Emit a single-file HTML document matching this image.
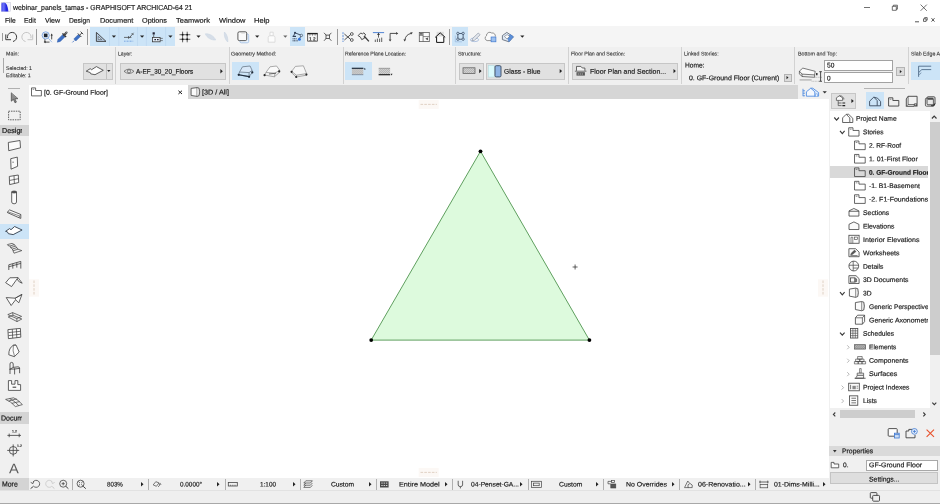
<!DOCTYPE html>
<html lang="en"><head><meta charset="utf-8"><title>webinar_panels_tamas - GRAPHISOFT ARCHICAD-64 21</title>
<style>
html,body{margin:0;padding:0}
body{width:940px;height:504px;position:relative;overflow:hidden;background:#fff;font-family:"Liberation Sans", sans-serif;}
.a{position:absolute;display:block}
.t{position:absolute;white-space:nowrap;transform-origin:0 50%;-webkit-text-stroke:0.18px;}
svg{overflow:visible}
</style></head><body>
<div class="a" style="left:0px;top:0px;width:940px;height:26.4px;background:#ffffff;"></div>
<svg class="a" style="left:0px;top:0px;" width="12" height="13" viewBox="0 0 12 13"><defs><linearGradient id="gi" x1="0" y1="0" x2="1" y2="0"><stop offset="0" stop-color="#4a4ef0"/><stop offset="0.35" stop-color="#6a70f6"/><stop offset="0.7" stop-color="#2226e0"/><stop offset="1" stop-color="#2a2ee4"/></linearGradient></defs><rect x="1.4" y="2.4" width="9" height="9" fill="#f4f4fc" stroke="#c4c4d4" stroke-width="0.5"/><path d="M1.4 11.4V3.6Q1.8 2.4 4.2 2.4Q7.6 3 8.4 11.4Z" fill="url(#gi)"/></svg>
<svg class="a" style="left:0px;top:0px;" width="940" height="14" viewBox="0 0 940 14"><path d="M864 7.5h6" stroke="#333" stroke-width="0.7" fill="none"/><path d="M892.3 6.3h4v4h-4z M893.4 6.3v-1.1h4v4h-1.1" stroke="#333" stroke-width="0.7" fill="none"/><path d="M920.6 4.6l6.2 6.2m0-6.2l-6.2 6.2" stroke="#333" stroke-width="0.7" fill="none"/></svg>
<svg class="a" style="left:890px;top:15px;" width="50" height="10" viewBox="0 0 50 10"><path d="M25 6.8h4" stroke="#555" stroke-width="1" fill="none"/><path d="M33.5 3.8h2.6v2.6h-2.6z M34.6 3.6v-1h2.6v2.6h-1" stroke="#444" stroke-width="0.8" fill="none"/><path d="M41.5 3.2l3 3.4m0-3.4l-3 3.4" stroke="#444" stroke-width="0.9" fill="none"/></svg>
<div class="a" style="left:0px;top:26.4px;width:940px;height:58.2px;background:#f0f0f0;"></div>
<div class="a" style="left:0px;top:26.4px;width:940px;height:20.3px;background:#f5f5f5;"></div>
<div class="a" style="left:90.2px;top:27.1px;width:85px;height:18.9px;background:#cce4f7;"></div>
<div class="a" style="left:290.3px;top:27.1px;width:14.4px;height:18.8px;background:#cce4f7;"></div>
<div class="a" style="left:452.4px;top:27.1px;width:15.2px;height:18.8px;background:#cce4f7;"></div>
<div class="a" style="left:36.4px;top:28.5px;width:0.7px;height:16.5px;background:#9a9a9a;"></div>
<div class="a" style="left:87.3px;top:28.5px;width:0.7px;height:16.5px;background:#9a9a9a;"></div>
<div class="a" style="left:337.2px;top:28.5px;width:0.7px;height:16.5px;background:#9a9a9a;"></div>
<div class="a" style="left:449.3px;top:28.5px;width:0.7px;height:16.5px;background:#9a9a9a;"></div>
<div class="a" style="left:2.3px;top:33px;width:0.7px;height:8.4px;background:#9a9a9a;"></div>
<div class="a" style="left:115.4px;top:47.4px;width:0.9px;height:37px;background:#d2d2d2;"></div>
<div class="a" style="left:228.5px;top:47.4px;width:0.9px;height:37px;background:#d2d2d2;"></div>
<div class="a" style="left:342.5px;top:47.4px;width:0.9px;height:37px;background:#d2d2d2;"></div>
<div class="a" style="left:455px;top:47.4px;width:0.9px;height:37px;background:#d2d2d2;"></div>
<div class="a" style="left:568px;top:47.4px;width:0.9px;height:37px;background:#d2d2d2;"></div>
<div class="a" style="left:681.2px;top:47.4px;width:0.9px;height:37px;background:#d2d2d2;"></div>
<div class="a" style="left:794.2px;top:47.4px;width:0.9px;height:37px;background:#d2d2d2;"></div>
<div class="a" style="left:907.5px;top:47.4px;width:0.9px;height:37px;background:#d2d2d2;"></div>
<div class="a" style="left:3.2px;top:58px;width:0.7px;height:15px;background:#a8a8a8;"></div>
<div class="a" style="left:83px;top:62.5px;width:30px;height:17px;background:#e1e1e1;border:1px solid #c6c6c6;box-sizing:border-box;"></div>
<div class="a" style="left:105.8px;top:63.5px;width:0.6px;height:15px;background:#c0c0c0;"></div>
<div class="a" style="left:119.5px;top:63px;width:106.3px;height:16.5px;background:#e1e1e1;border:1px solid #c6c6c6;box-sizing:border-box;"></div>
<div class="a" style="left:232px;top:62px;width:27px;height:18px;background:#cce4f7;"></div>
<div class="a" style="left:345px;top:62px;width:27px;height:18px;background:#cce4f7;"></div>
<div class="a" style="left:459px;top:63px;width:25px;height:16.5px;background:#e1e1e1;border:1px solid #c6c6c6;box-sizing:border-box;"></div>
<div class="a" style="left:485.8px;top:63px;width:79.5px;height:16.5px;background:#e1e1e1;border:1px solid #c6c6c6;box-sizing:border-box;"></div>
<div class="a" style="left:572px;top:63px;width:106.3px;height:16.5px;background:#e1e1e1;border:1px solid #c6c6c6;box-sizing:border-box;"></div>
<div class="a" style="left:784px;top:74px;width:8px;height:8px;background:#dcdcdc;border:0.6px solid #b4b4b4;box-sizing:border-box;"></div>
<div class="a" style="left:824px;top:59.5px;width:68.5px;height:11px;background:#fff;border:0.8px solid #a2a2a2;box-sizing:border-box;"></div>
<div class="a" style="left:824px;top:72.3px;width:68.5px;height:11px;background:#fff;border:0.8px solid #a2a2a2;box-sizing:border-box;"></div>
<div class="a" style="left:896px;top:67.3px;width:9px;height:8.7px;background:#dcdcdc;border:0.6px solid #b4b4b4;box-sizing:border-box;"></div>
<div class="a" style="left:910.5px;top:62px;width:30px;height:18px;background:#cce4f7;"></div>
<div class="a" style="left:28.5px;top:84.6px;width:770px;height:14.1px;background:#d6d6d6;"></div>
<div class="a" style="left:28.6px;top:84.6px;width:159.2px;height:14.1px;background:#ffffff;"></div>
<div class="a" style="left:798.4px;top:84.6px;width:30.4px;height:14.1px;background:#f0f0f0;"></div>
<div class="a" style="left:0px;top:84.6px;width:28.6px;height:419.4px;background:#f0f0f0;"></div>
<div class="a" style="left:7.5px;top:87.6px;width:12px;height:0.6px;background:#b0b0b0;"></div>
<div class="a" style="left:0px;top:124.9px;width:28.5px;height:11.3px;background:#d4d4d4;"></div>
<div class="a" style="left:0px;top:223.5px;width:28.5px;height:15.7px;background:#cce4f7;"></div>
<div class="a" style="left:0px;top:412.4px;width:28.5px;height:12px;background:#d4d4d4;"></div>
<div class="a" style="left:0px;top:477.8px;width:28.5px;height:12.6px;background:#d4d4d4;"></div>
<svg class="a" style="left:28.5px;top:99px;" width="800" height="379" viewBox="0 0 800 379">
<polygon points="451.5,52.3 342.2,241.1 560.4,241.1" fill="#ddfadd" stroke="#5f9f5f" stroke-width="1" stroke-linejoin="round"/>
<circle cx="451.5" cy="52.3" r="1.9" fill="#000"/><circle cx="342.2" cy="241.1" r="1.9" fill="#000"/><circle cx="560.4" cy="241.1" r="1.9" fill="#000"/>
<path d="M543.6 168h5M546.1 165.5v5" stroke="#222" stroke-width="0.7" fill="none"/>
</svg>
<div class="a" style="left:28.5px;top:477.8px;width:800.5px;height:12.6px;background:#f0f0f0;"></div>
<div class="a" style="left:0px;top:490.3px;width:940px;height:13.7px;background:#efefef;"></div>
<div class="a" style="left:0px;top:490.3px;width:940px;height:0.6px;background:#e2e2e2;"></div>
<div class="a" style="left:0px;top:503px;width:940px;height:1px;background:#a8a8a8;"></div>
<svg class="a" style="left:140.8px;top:481.9px;" width="3" height="5" viewBox="0 0 3 5"><path d="M0 0L2.5 2.2L0 4.4Z" fill="#222"/></svg>
<svg class="a" style="left:217.0px;top:481.9px;" width="3" height="5" viewBox="0 0 3 5"><path d="M0 0L2.5 2.2L0 4.4Z" fill="#222"/></svg>
<svg class="a" style="left:292.5px;top:481.9px;" width="3" height="5" viewBox="0 0 3 5"><path d="M0 0L2.5 2.2L0 4.4Z" fill="#222"/></svg>
<svg class="a" style="left:368.8px;top:481.9px;" width="3" height="5" viewBox="0 0 3 5"><path d="M0 0L2.5 2.2L0 4.4Z" fill="#222"/></svg>
<svg class="a" style="left:444.5px;top:481.9px;" width="3" height="5" viewBox="0 0 3 5"><path d="M0 0L2.5 2.2L0 4.4Z" fill="#222"/></svg>
<svg class="a" style="left:520.3px;top:481.9px;" width="3" height="5" viewBox="0 0 3 5"><path d="M0 0L2.5 2.2L0 4.4Z" fill="#222"/></svg>
<svg class="a" style="left:595.8px;top:481.9px;" width="3" height="5" viewBox="0 0 3 5"><path d="M0 0L2.5 2.2L0 4.4Z" fill="#222"/></svg>
<svg class="a" style="left:671.6999999999999px;top:481.9px;" width="3" height="5" viewBox="0 0 3 5"><path d="M0 0L2.5 2.2L0 4.4Z" fill="#222"/></svg>
<svg class="a" style="left:748.0999999999999px;top:481.9px;" width="3" height="5" viewBox="0 0 3 5"><path d="M0 0L2.5 2.2L0 4.4Z" fill="#222"/></svg>
<svg class="a" style="left:822.8px;top:481.9px;" width="3" height="5" viewBox="0 0 3 5"><path d="M0 0L2.5 2.2L0 4.4Z" fill="#222"/></svg>
<div class="a" style="left:72.3px;top:479px;width:0.7px;height:10.5px;background:#b0b0b0;"></div>
<div class="a" style="left:148.4px;top:479px;width:0.7px;height:10.5px;background:#b0b0b0;"></div>
<div class="a" style="left:224.5px;top:479px;width:0.7px;height:10.5px;background:#b0b0b0;"></div>
<div class="a" style="left:299.6px;top:479px;width:0.7px;height:10.5px;background:#b0b0b0;"></div>
<div class="a" style="left:375.7px;top:479px;width:0.7px;height:10.5px;background:#b0b0b0;"></div>
<div class="a" style="left:451.8px;top:479px;width:0.7px;height:10.5px;background:#b0b0b0;"></div>
<div class="a" style="left:527.5px;top:479px;width:0.7px;height:10.5px;background:#b0b0b0;"></div>
<div class="a" style="left:603.4px;top:479px;width:0.7px;height:10.5px;background:#b0b0b0;"></div>
<div class="a" style="left:679.4px;top:479px;width:0.7px;height:10.5px;background:#b0b0b0;"></div>
<div class="a" style="left:754.6px;top:479px;width:0.7px;height:10.5px;background:#b0b0b0;"></div>
<div class="a" style="left:828.5px;top:84.6px;width:111.5px;height:405.7px;background:#f0f0f0;"></div>
<div class="a" style="left:864px;top:87.8px;width:41px;height:0.7px;background:#b4b4b4;"></div>
<div class="a" style="left:830.5px;top:92.8px;width:25.3px;height:16.5px;background:#e1e1e1;border:1px solid #c6c6c6;box-sizing:border-box;"></div>
<div class="a" style="left:866.3px;top:92px;width:18px;height:17.3px;background:#cce4f7;"></div>
<div class="a" style="left:829.5px;top:110.6px;width:110.5px;height:297px;background:#ffffff;"></div>
<div class="a" style="left:929.8px;top:110.6px;width:10.2px;height:297px;background:#f0f0f0;"></div>
<div class="a" style="left:930px;top:122.2px;width:10px;height:232.8px;background:#cdcdcd;"></div>
<div class="a" style="left:829.5px;top:166px;width:98.9px;height:12.2px;background:#d9d9d9;"></div>
<div class="a" style="left:829.5px;top:407.6px;width:110.5px;height:12px;background:#f0f0f0;"></div>
<div class="a" style="left:839.6px;top:409.8px;width:75.7px;height:8.6px;background:#cdcdcd;"></div>
<div class="a" style="left:828.7px;top:445.8px;width:111.3px;height:10.4px;background:#dadada;"></div>
<svg class="a" style="left:832.8px;top:449.6px;" width="4" height="3" viewBox="0 0 4 3"><path d="M0 0h3.6L1.8 2.4Z" fill="#333"/></svg>
<div class="a" style="left:866.3px;top:459.5px;width:72.2px;height:11px;background:#fff;border:0.8px solid #a8a8a8;box-sizing:border-box;"></div>
<div class="a" style="left:830.2px;top:472.4px;width:108px;height:12px;background:#dedede;border:0.8px solid #c4c4c4;box-sizing:border-box;"></div>
<svg class="a" style="left:0;top:0" width="940" height="504" viewBox="0 0 940 504"><g transform="translate(11.5 37)" ><path d="M-3.9 1.2A4.6 4.6 0 1 1 1.5 4.5" fill="none" stroke="#3a3a3a" stroke-width="1"/><path d="M-5.7 -2.6V2.7H-0.5" fill="none" stroke="#3a3a3a" stroke-width="1"/></g>
<g transform="translate(27 37)" ><path d="M3.9 1.2A4.6 4.6 0 1 0 -1.5 4.5" fill="none" stroke="#c6c6c6" stroke-width="1"/><path d="M5.7 -2.6V2.7H0.5" fill="none" stroke="#c6c6c6" stroke-width="1"/></g>
<g transform="translate(47.3 37.2)" ><circle cx="-1.6" cy="-1.8" r="3.6" fill="#e8f0fb" stroke="#5b8fd8" stroke-width="0.7"/><rect x="-3.4" y="-3.6" width="3.6" height="3.6" fill="#1d2530"/><path d="M1 1L4.6 5" stroke="#7fa8e0" stroke-width="0.7"/><path d="M-2.4 2v2.9h4.6" fill="none" stroke="#222" stroke-width="0.8"/><path d="M-3.6 4.9l1.8-1.1v2.2z" fill="#222"/><path d="M4.4 -2.2v4.4" stroke="#222" stroke-width="0.8"/><path d="M4.4 -3.6l1.1 1.9h-2.2z" fill="#222"/></g>
<g transform="translate(62.5 37)" ><path d="M-5.2 5.2L-4.4 2.2L0.6 -2.8L2.8 -0.6L-2.2 4.4Z" fill="#3c6fc4" stroke="#2c5aa8" stroke-width="0.5"/><path d="M0 -3.6L3.6 0" stroke="#333" stroke-width="1.3"/><path d="M1.6 -1.8L4 -4.4" stroke="#444" stroke-width="2.2" stroke-linecap="round"/><path d="M3.2 -3.4L4.4 -4.8" stroke="#dfe6f2" stroke-width="0.6"/></g>
<g transform="translate(77.8 37)" ><path d="M-5.4 5.4L-3.6 3.6" stroke="#3c6fc4" stroke-width="0.8"/><path d="M-4 2L0.6 -2.6L2.6 -0.6L-2 4Z" fill="#3c6fc4" stroke="#2c5aa8" stroke-width="0.5"/><path d="M0 -3.6L3.6 0" stroke="#333" stroke-width="0.9"/><path d="M1.8 -1.8L4.2 -4.2M2.8 -5.4L5.4 -2.8" stroke="#333" stroke-width="0.9"/></g>
<path d="M109.5 27.2V46" stroke="#b9d3ec" stroke-width="0.6"/>
<path d="M118.8 27.2V46" stroke="#b9d3ec" stroke-width="0.6"/>
<path d="M137.5 27.2V46" stroke="#b9d3ec" stroke-width="0.6"/>
<path d="M146.4 27.2V46" stroke="#b9d3ec" stroke-width="0.6"/>
<path d="M165.6 27.2V46" stroke="#b9d3ec" stroke-width="0.6"/>
<g transform="translate(101.2 37)" ><path d="M-4.8 -4.6V4.4H4.8Z" fill="#b8cde4" stroke="#3a3a3a" stroke-width="0.9" stroke-linejoin="round"/><path d="M-3 -0.6V2.6H0.6Z" fill="#cce4f7" stroke="#3a3a3a" stroke-width="0.5"/></g>
<path d="M111.80000000000001 35.45h4.2l-2.1 2.3z" fill="#222"/>
<g transform="translate(129 37)" ><path d="M-5 0.4H2.4M-0.4 -1v2.8M0.6 0.6L4.6 -4.2M2.6 -3.4l2 1" fill="none" stroke="#3a3a3a" stroke-width="0.7"/><path d="M-5 4.2H4.2" stroke="#5b8fd8" stroke-width="0.8" stroke-dasharray="0.9 0.6"/></g>
<path d="M140.0 35.45h4.2l-2.1 2.3z" fill="#222"/>
<g transform="translate(157.4 37.2)" ><rect x="-4.8" y="-4.9" width="2.2" height="2.2" fill="#223"/><path d="M-3.7 -2.6V0.2" stroke="#3a3a3a" stroke-width="0.7"/><rect x="-4.9" y="0.2" width="7.6" height="4.4" fill="#e6f0fa" stroke="#3a3a3a" stroke-width="0.8"/><path d="M-3 2.4h1.6M-0.4 2.4h1.6" stroke="#223" stroke-width="1.4"/><path d="M2.8 1.2h2.6M2.8 3.4h2.6" stroke="#3a3a3a" stroke-width="0.6"/></g>
<path d="M168.3 35.45h4.2l-2.1 2.3z" fill="#222"/>
<g transform="translate(184.9 37)" ><path d="M-2.3 -5.3V5.3M2.3 -5.3V5.3M-5.4 -2.3H5.4M-5.4 2.3H5.4" stroke="#222" stroke-width="0.7"/><rect x="-3.1" y="-3.1" width="1.6" height="1.6" fill="#111"/><rect x="1.5" y="-3.1" width="1.6" height="1.6" fill="#111"/><rect x="-3.1" y="1.5" width="1.6" height="1.6" fill="#111"/><rect x="1.5" y="1.5" width="1.6" height="1.6" fill="#111"/></g>
<path d="M196.4 35.45h4.2l-2.1 2.3z" fill="#222"/>
<g transform="translate(210.5 37)" ><path d="M-5.2 -3.2C-1 -3.6 3.6 -1 5.2 3C1 3.4 -3.6 1 -5.2 -3.2Z" fill="#d6dee8" stroke="#c6d2e0" stroke-width="0.5"/></g>
<g transform="translate(226 37)" ><path d="M-1.6 -5C1 -3 2.2 1.6 1.8 5C-1 3 -2.2 -1.6 -1.6 -5Z" fill="#d6dee8" stroke="#c6d2e0" stroke-width="0.5"/></g>
<g transform="translate(243.3 37.2)" ><rect x="-3.4" y="-3.2" width="8.8" height="8.8" rx="1.4" fill="#eaf2fb" stroke="#9dbde4" stroke-width="0.8"/><rect x="-5.4" y="-5.4" width="8.8" height="8.8" rx="1.4" fill="#fafafa" stroke="#4a4a4a" stroke-width="0.9"/><path d="M-2 -3.8h3.6" stroke="#cfcfcf" stroke-width="0.6"/></g>
<path d="M255.1 35.45h4.2l-2.1 2.3z" fill="#222"/>
<g transform="translate(271.6 37.2)" ><path d="M-1.6 -5h3.2v3.6h-3.2z" fill="#fcfcfc" stroke="#d2d2d2" stroke-width="0.7"/><path d="M-3.4 5V0.2Q-3.4 -1.4 -1.6 -1.4H1.6Q3.4 -1.4 3.4 0.2V5Z" fill="#fcfcfc" stroke="#d2d2d2" stroke-width="0.7"/></g>
<path d="M283.2 35.45h4.2l-2.1 2.3z" fill="#666"/>
<g transform="translate(297.6 37)" ><path d="M-4.2 -0.6L-2.6 -4.2L3.8 -1.6L1.4 2.4" fill="none" stroke="#2f3e55" stroke-width="0.9"/><circle cx="-2.6" cy="-4.2" r="1" fill="#2f3e55"/><circle cx="3.8" cy="-1.6" r="1.2" fill="#cce4f7" stroke="#2f3e55" stroke-width="0.6"/><circle cx="1.8" cy="2.2" r="1.5" fill="#2f6fd8"/><path d="M-5 -0.6h3.4" stroke="#2f3e55" stroke-width="1.2"/><path d="M-5 1.8h4.2M-5 3.8h5.2" stroke="#2f3e55" stroke-width="1" stroke-dasharray="1 0.5"/></g>
<g transform="translate(312.5 37.2)" ><path d="M-5.2 -3.6H5.2" stroke="#222" stroke-width="1.4"/><path d="M-4.9 -3.6V4H4.9V-3.6" fill="none" stroke="#3a3a3a" stroke-width="0.8"/><path d="M-2.6 -3V-1.6M0 -3V-1.6M2.6 -3V-1.6" stroke="#3a3a3a" stroke-width="0.6"/></g>
<g transform="translate(327.7 36.8)" ><path d="M-3.7 -4L3.7 4M3.7 -4L-3.7 4" stroke="#3a3a3a" stroke-width="0.8"/><rect x="-1.7" y="-1.7" width="3.4" height="3.4" fill="#f0f0f0" stroke="#3a3a3a" stroke-width="0.8"/></g>
<g transform="translate(348 37)" ><path d="M-5 -4.8V5" stroke="#3f78d0" stroke-width="0.8" stroke-dasharray="2 0.8"/><path d="M-3.6 -3L2.6 2.4M-3.6 3L2.6 -2.4" stroke="#3a3a3a" stroke-width="0.9"/><circle cx="3.8" cy="-3" r="1.4" fill="none" stroke="#3a3a3a" stroke-width="0.8"/><circle cx="3.8" cy="3" r="1.4" fill="none" stroke="#3a3a3a" stroke-width="0.8"/></g>
<g transform="translate(363.3 37.2)" ><path d="M-5.2 -1.6L-2.6 -4.2L-0.8 -3.4L0.6 -4.4L2.4 -2.2L0.8 -0.8L1.2 1L-1.6 2.4L-2.8 0Z" fill="none" stroke="#3a3a3a" stroke-width="0.9" stroke-linejoin="round"/><path d="M1 -1L5.6 4.2" stroke="#3a3a3a" stroke-width="1.3"/></g>
<g transform="translate(378.5 37)" ><path d="M-5.6 -4.4H5.6" stroke="#3f78d0" stroke-width="0.9"/><path d="M0 -3.6V0.6" stroke="#3a3a3a" stroke-width="0.8"/><path d="M0 -4.2l1.5 2.2h-3z" fill="#3a3a3a"/><path d="M-3.2 2.6V5M-1.1 1.6V5M1.1 1.6V5M3.2 0.6V5" stroke="#3a3a3a" stroke-width="0.8"/></g>
<g transform="translate(393.5 36.8)" ><path d="M-3.4 3V-3.4H3" fill="none" stroke="#3a3a3a" stroke-width="0.9"/><path d="M4.8 -3.4l-2.2 -1.4v2.8z M-3.4 4.8l-1.4 -2.2h2.8z" fill="#3a3a3a"/></g>
<g transform="translate(408.3 36.8)" ><path d="M-3.4 3.2Q-2.6 -2.4 3 -3.4" fill="none" stroke="#3a3a3a" stroke-width="0.9"/><path d="M4.6 -4.2l-2.6 -0.4l0.8 2.4z M-3.6 4.8l-1.3 -2.2h2.6z" fill="#3a3a3a"/></g>
<g transform="translate(424.3 37)" ><rect x="-5" y="-4.6" width="10" height="9.2" fill="#fafafa" stroke="#5a5a5a" stroke-width="0.8"/><path d="M-1.2 -4.6V4.6M-1.2 -0.4H5M-5 -1.6H-1.2" stroke="#5a5a5a" stroke-width="0.7"/><rect x="-4.4" y="-4.2" width="2.8" height="2" fill="#6a6a6a"/><path d="M1 1.8l2.6-1.4v2.8z" fill="#444"/></g>
<g transform="translate(440.2 37.4)" ><rect x="-3.6" y="-5.6" width="7.2" height="5" fill="#dcdcdc"/><path d="M-5 0L0 -4.6L5 0" fill="none" stroke="#111" stroke-width="1" stroke-linejoin="miter"/><path d="M-3.6 -0.8V5H3.6V-0.8" fill="#fdfdfd" stroke="#111" stroke-width="1"/></g>
<g transform="translate(460.5 36.6)" ><rect x="-2.6" y="-3" width="5.2" height="5.6" fill="none" stroke="#34445c" stroke-width="0.8"/><circle cx="-2.6" cy="-3.2" r="1.2" fill="#cce4f7" stroke="#34445c" stroke-width="0.7"/><circle cx="2.6" cy="-3.2" r="1.2" fill="#cce4f7" stroke="#34445c" stroke-width="0.7"/><circle cx="-2.6" cy="2.6" r="1.2" fill="#cce4f7" stroke="#34445c" stroke-width="0.7"/><circle cx="2.6" cy="2.6" r="1.2" fill="#cce4f7" stroke="#34445c" stroke-width="0.7"/><path d="M-5.2 -1V5.2H1.4" fill="none" stroke="#8fb0d8" stroke-width="0.6"/></g>
<g transform="translate(475.5 37.4)" ><ellipse cx="-1" cy="2.4" rx="4.2" ry="1.8" fill="none" stroke="#7f9fd0" stroke-width="0.6"/><path d="M-3.6 3.4L-2.8 1L2.8 -4.4L4.6 -2.6L-1 2.8Z" fill="#e4e8ee" stroke="#8a94a4" stroke-width="0.7"/></g>
<g transform="translate(490.5 37)" ><path d="M-3.4 3.6A2.6 2.6 0 0 1 -4 -1.2A3.2 3.2 0 0 1 1.2 -4A3 3 0 0 1 4.8 -0.4" fill="#fafafa" stroke="#7a7a7a" stroke-width="0.8"/><path d="M-3.4 3.6H0.6" stroke="#7a7a7a" stroke-width="0.8"/><rect x="0.6" y="0" width="4.8" height="4.8" fill="#9dc0ee" stroke="#3f78d0" stroke-width="0.7"/></g>
<g transform="translate(507.8 37)" ><path d="M-5.4 -1.4L-1 -4.6L5.6 -0.2L1.2 4.8L-5.4 2.6Z" fill="#dfe8f4" stroke="#55606e" stroke-width="0.8" stroke-linejoin="round"/><path d="M-0.6 0.2L2.8 -2.4L5.6 -0.2L1.2 4.8Z" fill="#5b8fd8" stroke="#3f78d0" stroke-width="0.5"/><path d="M-3.4 -0.6L-0.6 -2.4L1.8 -0.6L-0.8 2Z" fill="#fafafa" stroke="#55606e" stroke-width="0.5"/></g>
<path d="M520.1999999999999 35.45h4.2l-2.1 2.3z" fill="#222"/>
<g transform="translate(94.8 70.7)" ><path d="M-8.6 0.5L-4.6 -2L-3.2 -1L1.6 -4.1L8.5 -0.4L0.2 4L-4 3.2L-4.6 1.8Z" fill="#fdfdfd" stroke="#3a3a3a" stroke-width="0.8" stroke-linejoin="round"/></g>
<path d="M107.1 69.9h3.4l-1.7 2z" fill="#222"/>
<g transform="translate(129 71.3)" ><path d="M-5 0Q0 -4.4 5 0Q0 4.4 -5 0Z" fill="none" stroke="#555" stroke-width="0.7"/><circle cx="0" cy="0" r="1.6" fill="none" stroke="#555" stroke-width="0.7"/></g>
<path d="M220.4 69.0l2.4 2.2l-2.4 2.2z" fill="#222"/>
<g transform="translate(245.5 71)" ><path d="M-6 1L-3 -4.2L4.6 -5L6.6 -0.6L3.6 1.6Z" fill="#d8e8f8" stroke="#5a6a7a" stroke-width="0.7" stroke-linejoin="round"/><path d="M-6 1L-6.8 3.8L3.6 5.6L6.8 1.6L6.6 -0.6M3.6 1.6V5.6" fill="none" stroke="#5a6a7a" stroke-width="0.7" stroke-linejoin="round"/><path d="M-6.8 3.8L3.6 5.6" stroke="#223040" stroke-width="1.1"/><circle cx="-6.8" cy="3.8" r="1.1" fill="#1f2a38"/><circle cx="3.6" cy="5.8" r="1.1" fill="#1f2a38"/><circle cx="6.8" cy="1.4" r="1.1" fill="#1f2a38"/></g>
<g transform="translate(272 71)" ><path d="M-6 1.4L-2 -4.2L4.6 -5L7.6 -0.8L3 2.2Z" fill="#fafafa" stroke="#8a8a8a" stroke-width="0.7" stroke-linejoin="round"/><path d="M-6 1.4L-7.6 4L2.4 5.8L7.4 1.4L7.6 -0.8M3 2.2L2.4 5.8" fill="none" stroke="#8a8a8a" stroke-width="0.7" stroke-linejoin="round"/><path d="M-3 3L4 2.2" stroke="#5a5a5a" stroke-width="0.9"/><circle cx="-7.4" cy="4.2" r="1.1" fill="#2a2a2a"/><circle cx="7.2" cy="0.4" r="1.1" fill="#2a2a2a"/></g>
<g transform="translate(299 71)" ><path d="M-7.4 0.4L-3.6 -4.6L4.4 -5.2L7.6 2.6L-2.6 4.2Z" fill="#f6f6f6" stroke="#8a8a8a" stroke-width="0.7" stroke-linejoin="round"/><path d="M-7.4 0.4L-7.6 1.6L-2.8 6L7.4 4.2L7.6 2.6M-2.6 4.2L-2.8 6" fill="none" stroke="#8a8a8a" stroke-width="0.7" stroke-linejoin="round"/><circle cx="-7.4" cy="0.8" r="1.1" fill="#2a2a2a"/><circle cx="-2.8" cy="6" r="1.1" fill="#2a2a2a"/><circle cx="7.4" cy="3.6" r="1.1" fill="#2a2a2a"/></g>
<defs><pattern id="hat" width="1.4" height="1.4" patternUnits="userSpaceOnUse" patternTransform="rotate(45)"><rect width="1.4" height="1.4" fill="#d8d8d8"/><path d="M0 0V1.4" stroke="#777" stroke-width="0.6"/></pattern></defs>
<g transform="translate(357.6 71.3)" ><rect x="-5.7" y="-2.8" width="11.4" height="6.2" fill="url(#hat)"/><path d="M-5.8 -3H5.8" stroke="#1f2a38" stroke-width="1.2"/><path d="M-5.7 3.4H5.7" stroke="#55657a" stroke-width="0.6"/><path d="M7.2 -3.6l0.9 1.7h-1.8z" fill="#1f2a38"/></g>
<g transform="translate(384.4 71.3)" ><rect x="-5.7" y="-3" width="11.4" height="6.2" fill="url(#hat)"/><path d="M-5.8 3.4H5.8" stroke="#222" stroke-width="1.2"/><path d="M-5.7 -3H5.7" stroke="#777" stroke-width="0.6"/><path d="M7.2 4.2l0.9 -1.7h-1.8z" fill="#222"/></g>
<g transform="translate(469 70.7)" ><rect x="-6" y="-2.9" width="12" height="5.8" fill="url(#hat)" stroke="#555" stroke-width="0.7"/></g>
<path d="M479.2 68.89999999999999l2.4 2.2l-2.4 2.2z" fill="#222"/>
<rect x="488.4" y="65.6" width="5.8" height="11.4" fill="#dcfafc" stroke="#b0dce0" stroke-width="0.5"/><rect x="495" y="65.7" width="6" height="11.2" rx="1.2" fill="#8fb4e4" stroke="#3a4a5e" stroke-width="0.9"/>
<path d="M559.6999999999999 68.89999999999999l2.4 2.2l-2.4 2.2z" fill="#222"/>
<g transform="translate(580.7 71)" ><path d="M-4.2 -0.2V-4.6H0.2L1.6 -3H4.2V-0.2" fill="#f4f4f4" stroke="#444" stroke-width="0.8" stroke-linejoin="round"/><path d="M-5.8 0.2H5.8" stroke="#444" stroke-width="0.7"/><rect x="-4.2" y="1.2" width="8.4" height="3.4" fill="#555"/><path d="M-3 3H3" stroke="#ddd" stroke-width="0.8" stroke-dasharray="1.2 0.8"/></g>
<path d="M673.5 68.89999999999999l2.4 2.2l-2.4 2.2z" fill="#222"/>
<path d="M786.5 75.89999999999999l2 1.7l-2 1.7z" fill="#222"/>
<path d="M899.8 69.89999999999999l2 1.7l-2 1.7z" fill="#222"/>
<g transform="translate(810 74.5)" ><path d="M-10.6 -3.4L-7.2 -6.4L5.2 -3.2L4.6 0.4L-8 -0.4Z" fill="#fbfbfb" stroke="#444" stroke-width="0.7" stroke-linejoin="round"/><path d="M-10.6 -3.4V-0.6L-8 2L4.6 2.8V0.4M-8 -0.4V2" fill="none" stroke="#444" stroke-width="0.7" stroke-linejoin="round"/><path d="M-10.4 5.4H1.6" stroke="#bdbdbd" stroke-width="1.6"/><path d="M4.6 2.8H12M1.6 6.8H12" stroke="#888" stroke-width="0.5" stroke-dasharray="1 0.6"/><path d="M10.6 -3V6.6" stroke="#222" stroke-width="0.8"/><path d="M9.2 -2.8h2.8M9.2 6.8h2.8" stroke="#222" stroke-width="0.7"/><path d="M6.8 -1.6v2.4" stroke="#222" stroke-width="1.4"/></g>
<g transform="translate(925 71.4)" ><path d="M-6.4 -5.2H6.2M-3.2 -1.8H6.2M-6.4 -5.2V1.2L-3.2 -1.8" fill="none" stroke="#3f5a7a" stroke-width="0.8"/><path d="M-6.4 1.2V5.4" stroke="#3f5a7a" stroke-width="0.8"/><path d="M-6.2 3.2Q-4.6 3.2 -3.8 1.2" fill="none" stroke="#3f5a7a" stroke-width="0.5"/></g>
<path transform="translate(31.2 87.5) scale(1.0)" d="M0.3 8.4V0.4H4.4V3H10.2V8.4Z" fill="#fff" stroke="#444" stroke-width="0.8" stroke-linejoin="miter"/><path transform="translate(31.2 87.5) scale(1.0)" d="M1.4 1.8h1.6" stroke="#444" stroke-width="0.6"/>
<g transform="translate(195.5 92)" ><path d="M-4.4 -3.6L1.6 -4.4V4.4L-4.4 3.4Z" fill="#fafafa" stroke="#444" stroke-width="0.8" stroke-linejoin="round"/><path d="M1.6 -4.4L3.6 -3.8Q4.8 0 3.6 3.6L1.6 4.4" fill="#e4e4e4" stroke="#444" stroke-width="0.8" stroke-linejoin="round"/></g>
<path d="M178.4 90.7L182 94M182 90.7L178.4 94" stroke="#222" stroke-width="1"/>
<g transform="translate(810.6 92.2)" ><path d="M-7.6 -3.4V4M-7.6 -1.4h2M-7.6 1h2M-7.6 3.6h2" stroke="#3f82e0" stroke-width="0.8" fill="none"/><path d="M0.2 -4H2.2L8 0.4V4H3.6" fill="#e4eefb" stroke="#3f82e0" stroke-width="0.8" stroke-linejoin="miter"/><path d="M-4.2 4V-0.4L0.2 -4L4.2 -0.4V4Z" fill="#f4f8fe" stroke="#3f82e0" stroke-width="0.8" stroke-linejoin="miter"/><path d="M5 4V1.6H6.8V4" fill="#fff" stroke="#3f82e0" stroke-width="0.5"/></g>
<path d="M822.6 91.25h4.2l-2.1 2.3z" fill="#333"/>
<path d="M11.3 93.2V101.2L13.4 99.4L15 102.8L16.4 102.1L14.9 98.9L17.6 98.7Z" fill="#8c8c8c" stroke="#333" stroke-width="0.6" stroke-linejoin="round" stroke-linecap="round" />
<rect x="8.6" y="111.2" width="11.6" height="8.6" fill="none" stroke="#3c3c3c" stroke-width="0.8" stroke-dasharray="1.5 0.9"/>
<path d="M8.7 142.4L20 140.5L20.5 147.8L9.1 150.6Z" fill="#fbfbfb" stroke="#3c3c3c" stroke-width="0.8" stroke-linejoin="round" stroke-linecap="round" />
<path d="M11.1 158.6L17.3 157.1L17.6 166.3L11.4 169Z" fill="#fbfbfb" stroke="#3c3c3c" stroke-width="0.8" stroke-linejoin="round" stroke-linecap="round" />
<path d="M12.4 162.2h1.4" stroke="#333" stroke-width="0.7"/>
<path d="M9.7 176.4L18.3 175L18.7 182.5L10 184.5Z" fill="#fbfbfb" stroke="#3c3c3c" stroke-width="0.8" stroke-linejoin="round" stroke-linecap="round" />
<path d="M14 175.7L14.4 183.5M9.85 180.4L18.5 178.7" stroke="#3c3c3c" stroke-width="0.7"/>
<path d="M11.7 192V202Q11.8 203.8 14.1 203.8Q16.4 203.8 16.5 202V192" fill="#fbfbfb" stroke="#3c3c3c" stroke-width="0.8" stroke-linejoin="round" stroke-linecap="round" />
<ellipse cx="14.1" cy="192" rx="2.4" ry="1" fill="#555" stroke="#3c3c3c" stroke-width="0.7"/>
<path d="M7.7 211.7L9.6 209.9L20.8 214.5V218.4L19.2 217.8L7.9 212.8Z" fill="#fbfbfb" stroke="#3c3c3c" stroke-width="0.8" stroke-linejoin="round" stroke-linecap="round" />
<path d="M7.7 211.7L19.4 215.9L20.8 214.5M19.4 215.9L19.2 217.8" fill="none" stroke="#3c3c3c" stroke-width="0.6"/>
<path d="M5.9 231.1L9.6 228.6L11 229.7L14.6 226.5L22.1 230L13.2 234.6L8.4 233.7L7.6 232.2Z" fill="#ffffff" stroke="#2f3b4a" stroke-width="0.9" stroke-linejoin="round" stroke-linecap="round" />
<path d="M7.4 244.6L12 243.4L14.4 244.6L10 246L10.6 247.6L15.4 246.2L17 247.6L12.4 249L13 250.8L18 249.2L21.8 250.6L14 253.2L13 250.8M10 246L8 245.6L7.4 244.6M12.4 249L10.6 247.6M15.4 246.2L14.4 244.6M18 249.2L17 247.6" fill="none" stroke="#3c3c3c" stroke-width="0.7" stroke-linejoin="round"/>
<path d="M8.8 270V264.8L20.8 261.4V268.6M8.8 266.8L20.8 263.4M12.8 268.6V263.8M16.8 267.6V262.6" fill="none" stroke="#3c3c3c" stroke-width="0.8" stroke-linejoin="round"/>
<path d="M5.9 282.4L9.8 277.8L18 277.6L22.2 283.2L19.4 282L17 279L11.8 286.3Z" fill="#fbfbfb" stroke="#3c3c3c" stroke-width="0.8" stroke-linejoin="round" stroke-linecap="round" />
<path d="M18 277.6L17 279" stroke="#3c3c3c" stroke-width="0.7"/>
<path d="M6.6 297.6L15.2 298.2L22 294.4L18.8 302.8L15.6 299.8L11.4 305.2Z" fill="#fbfbfb" stroke="#3c3c3c" stroke-width="0.8" stroke-linejoin="round" stroke-linecap="round" />
<path d="M15.2 298.2L15.6 299.8M15.2 298.2L22 294.4" stroke="#3c3c3c" stroke-width="0.7" fill="none"/>
<path d="M7.8 314.6L12.6 312.6L21.6 316.4L16.8 318.6ZM8.2 317L13 315.2L21.8 319L17 321.6ZM12.6 312.6L13 315.2M16.8 318.6L17 321.6" fill="none" stroke="#3c3c3c" stroke-width="0.7" stroke-linejoin="round"/>
<path d="M8.3 329.6L20.4 328.4L20.8 337.2L8.8 338.6Z" fill="#fbfbfb" stroke="#3c3c3c" stroke-width="0.8" stroke-linejoin="round" stroke-linecap="round" />
<path d="M12.3 329.2L12.7 338.1M16.4 328.8L16.8 337.7M8.45 332.6L20.55 331.3M8.6 335.6L20.7 334.2" stroke="#3c3c3c" stroke-width="0.7" fill="none"/>
<path d="M8.8 354.4Q8.6 348 13.4 345.2L16 345L19.2 352L14.6 356.4Z" fill="#fbfbfb" stroke="#3c3c3c" stroke-width="0.8" stroke-linejoin="round" stroke-linecap="round" />
<path d="M13.4 345.2Q12.2 351 14.6 356.4M16 345L13.4 345.2" fill="none" stroke="#3c3c3c" stroke-width="0.6"/>
<path d="M10 373.6V364Q10 362.4 11.6 362.4Q13.2 362.4 13.2 364V367.4L18 366.8Q19.6 366.8 19.6 368.4V372.8M10 369.2L13.2 367.4M14.6 369V374M14.6 369L19.6 368.4M10 369.2L14.6 369" fill="none" stroke="#3c3c3c" stroke-width="0.8" stroke-linejoin="round" stroke-linecap="round"/>
<path d="M8.8 380.6H11.6V384.2H15V380.6H17.8V384.6H20.6V390.4H8.8Z" fill="#fbfbfb" stroke="#3c3c3c" stroke-width="0.8" stroke-linejoin="round" stroke-linecap="round" />
<path d="M12.6 387.2h3.6" stroke="#333" stroke-width="1"/>
<path d="M5.6 399.4L13.6 397.8Q18 399.6 22.4 404.6L15.4 406.6Q11 401.4 5.6 399.4ZM9.6 398.6Q14.4 400.6 18.8 405.6M8.6 401Q12.6 400 16.6 398.8M11.8 403.4Q15.6 402.4 19.6 401.6" fill="none" stroke="#3c3c3c" stroke-width="0.7" stroke-linejoin="round"/>
<path d="M7.4 435.4H21M9.2 433.6V437.2M19.2 433.6V437.2" stroke="#3c3c3c" stroke-width="0.8" fill="none"/>
<circle cx="13.2" cy="450.4" r="3.9" fill="none" stroke="#3c3c3c" stroke-width="0.8"/><path d="M7.2 450.4H19.2M13.2 444.4V456.4" stroke="#3c3c3c" stroke-width="0.8"/>
<g transform="translate(840.8 101)" ><path d="M-4.4 -0.6V-3.2L-1.4 -5.2L1.8 -3.2V-0.6Z" fill="#fafafa" stroke="#404040" stroke-width="0.7" stroke-linejoin="miter"/><path d="M-1.4 -5.2H0.4L3 -3V-1.4" fill="none" stroke="#404040" stroke-width="0.6"/><path d="M-2.6 -0.4V4.6H0.8M-2.6 2H0.8" fill="none" stroke="#404040" stroke-width="0.7"/><path d="M1.6 2H4.4M1.6 4.6H4.4" stroke="#222" stroke-width="1.1"/></g>
<path d="M851.4 98.9l2.4 2.1l-2.4 2.1z" fill="#222"/>
<g transform="translate(869.2 96.6)"><path d="M0.4 9.2V4.6L4.6 0.5L8 4V9.2Z" fill="none" stroke="#3a4a5e" stroke-width="0.9" stroke-linejoin="round"/><path d="M4.6 0.5Q9 0.6 11.4 5V9.2H8" fill="none" stroke="#3a4a5e" stroke-width="0.9" stroke-linejoin="round"/></g>
<path transform="translate(888.3 97.4) scale(1.03)" d="M0.3 8.4V0.4H4.4V3H10.2V8.4Z" fill="none" stroke="#404040" stroke-width="0.8737864077669902" stroke-linejoin="miter"/><path transform="translate(888.3 97.4) scale(1.03)" d="M1.4 1.8h1.6" stroke="#404040" stroke-width="0.5825242718446602"/>
<g transform="translate(911.7 101.3)" ><path d="M-3.6 -5H5.4V2.6H2.6V5H-5.4V-2.4Z" fill="none" stroke="#404040" stroke-width="0.9" stroke-linejoin="round"/><path d="M-3.6 -5V3.2L-5.4 5M-3.6 3.2H2.6" fill="none" stroke="#404040" stroke-width="0.7"/><path d="M3 4.6H5.2V2.8" stroke="#404040" stroke-width="1.2" fill="none"/></g>
<g transform="translate(930.2 101.4)" ><rect x="-3.2" y="-4.6" width="8" height="8" rx="1" fill="#e8e8e8" stroke="#404040" stroke-width="0.9"/><rect x="-4.8" y="-3.2" width="8" height="8" rx="1" fill="none" stroke="#404040" stroke-width="0.8"/><path d="M-2.4 -2.4H3" stroke="#222" stroke-width="1.2"/><path d="M1 4.2L3.6 4.6L4.6 2" stroke="#222" stroke-width="1" fill="none"/></g>
<path d="M931.9 118.5L934.2 116.1L936.5 118.5" fill="none" stroke="#3a3a3a" stroke-width="1.2"/>
<path d="M932.3 402.7L934.3 404.7L936.3 402.7" fill="none" stroke="#3a3a3a" stroke-width="1.1"/>
<path d="M835.3 412.5L833.4 414.4L835.3 416.3" fill="none" stroke="#3a3a3a" stroke-width="1.1"/>
<path d="M923.3 412.5L925.2 414.4L923.3 416.3" fill="none" stroke="#3a3a3a" stroke-width="1.1"/>
<path d="M834.3000000000001 117.5L836.6 120.1L838.9 117.5" fill="none" stroke="#3a3a3a" stroke-width="1.15"/>
<g transform="translate(842.2 113.9)"><path d="M4 0.4H6.4L10.6 4.4V8.6H7.6" fill="#fdfdfd" stroke="#404040" stroke-width="0.8" stroke-linejoin="round"/><path d="M0.4 8.6V4L4 0.4L7.6 4V8.6Z" fill="#fdfdfd" stroke="#404040" stroke-width="0.8" stroke-linejoin="round"/></g>
<path d="M840.0 130.94L842.3 133.54000000000002L844.5999999999999 130.94" fill="none" stroke="#3a3a3a" stroke-width="1.15"/>
<path transform="translate(848.4 127.34000000000002) scale(1.04)" d="M0.3 8.4V0.4H4.4V3H10.2V8.4Z" fill="none" stroke="#404040" stroke-width="0.7692307692307693" stroke-linejoin="miter"/><path transform="translate(848.4 127.34000000000002) scale(1.04)" d="M1.4 1.8h1.6" stroke="#404040" stroke-width="0.5769230769230769"/>
<path transform="translate(854.2 140.58) scale(1.08)" d="M0.3 8.4V0.4H4.4V3H10.2V8.4Z" fill="none" stroke="#404040" stroke-width="0.7407407407407407" stroke-linejoin="miter"/><path transform="translate(854.2 140.58) scale(1.08)" d="M1.4 1.8h1.6" stroke="#404040" stroke-width="0.5555555555555555"/>
<path transform="translate(854.2 154.02) scale(1.08)" d="M0.3 8.4V0.4H4.4V3H10.2V8.4Z" fill="none" stroke="#404040" stroke-width="0.7407407407407407" stroke-linejoin="miter"/><path transform="translate(854.2 154.02) scale(1.08)" d="M1.4 1.8h1.6" stroke="#404040" stroke-width="0.5555555555555555"/>
<path transform="translate(854.2 167.46) scale(1.08)" d="M0.3 8.4V0.4H4.4V3H10.2V8.4Z" fill="none" stroke="#404040" stroke-width="0.7407407407407407" stroke-linejoin="miter"/><path transform="translate(854.2 167.46) scale(1.08)" d="M1.4 1.8h1.6" stroke="#404040" stroke-width="0.5555555555555555"/>
<path transform="translate(854.2 180.9) scale(1.08)" d="M0.3 8.4V0.4H4.4V3H10.2V8.4Z" fill="none" stroke="#404040" stroke-width="0.7407407407407407" stroke-linejoin="miter"/><path transform="translate(854.2 180.9) scale(1.08)" d="M1.4 1.8h1.6" stroke="#404040" stroke-width="0.5555555555555555"/>
<path transform="translate(854.2 194.34) scale(1.08)" d="M0.3 8.4V0.4H4.4V3H10.2V8.4Z" fill="none" stroke="#404040" stroke-width="0.7407407407407407" stroke-linejoin="miter"/><path transform="translate(854.2 194.34) scale(1.08)" d="M1.4 1.8h1.6" stroke="#404040" stroke-width="0.5555555555555555"/>
<path d="M849.0 216.08V210.88000000000002L853.9 208.48000000000002L858.9 210.88000000000002V216.08Z" fill="#fbfbfb" stroke="#404040" stroke-width="0.8" stroke-linejoin="round"/>
<path d="M849.0 211.28H858.9" stroke="#404040" stroke-width="0.8"/>
<path d="M849.0 229.52V224.32000000000002L853.9 221.92000000000002L858.9 224.32000000000002V229.52Z" fill="#fbfbfb" stroke="#404040" stroke-width="0.8" stroke-linejoin="round"/>
<rect x="848.9" y="235.26" width="10.2" height="8" fill="#fbfbfb" stroke="#404040" stroke-width="0.8"/><path d="M851 243.26V237.26H852.8V243.26" fill="none" stroke="#404040" stroke-width="0.6"/><rect x="854.4" y="237.05999999999997" width="3" height="2.4" fill="none" stroke="#404040" stroke-width="0.6"/>
<path d="M848.9 256.7V248.70000000000002H855.6L859.1 252.10000000000002V256.7Z" fill="#fbfbfb" stroke="#404040" stroke-width="0.8" stroke-linejoin="round"/><path d="M850.6 254.9L851.4 252.9L854.6 250.10000000000002L856 251.5L852.8 254.3Z" fill="#555" stroke="#404040" stroke-width="0.4"/><path d="M850.4 255.5H857.6" stroke="#404040" stroke-width="0.6"/>
<circle cx="853.8" cy="266.04" r="4.9" fill="#fbfbfb" stroke="#404040" stroke-width="0.8"/><path d="M853.2 261.14000000000004V270.94M849 265.24H858.6M853.2 268.04H858" fill="none" stroke="#404040" stroke-width="0.7"/>
<path d="M848.9 283.48V275.68H856L859.1 278.68V283.48Z" fill="#fbfbfb" stroke="#404040" stroke-width="0.8" stroke-linejoin="round"/><rect x="850.6" y="277.88000000000005" width="4.2" height="4.2" fill="none" stroke="#404040" stroke-width="0.8"/><path d="M854.8 277.88000000000005L856.6 278.88000000000005V281.68L854.8 282.08000000000004" fill="#777" stroke="#404040" stroke-width="0.6"/>
<path d="M840.0 292.22L842.3 294.82000000000005L844.5999999999999 292.22" fill="none" stroke="#3a3a3a" stroke-width="1.15"/>
<g transform="translate(854 292.72)" ><path d="M-4.6 -3.6L1.6 -4.6V4.6L-4.6 3.4Z" fill="#fbfbfb" stroke="#404040" stroke-width="0.8" stroke-linejoin="round"/><path d="M1.6 -4.6L3.8 -4Q5 0 3.8 3.8L1.6 4.6" fill="#e2e2e2" stroke="#404040" stroke-width="0.8" stroke-linejoin="round"/></g>
<g transform="translate(860 306.16)" ><path d="M-4.6 -3.6L1.6 -4.6V4.6L-4.6 3.4Z" fill="#fbfbfb" stroke="#404040" stroke-width="0.8" stroke-linejoin="round"/><path d="M1.6 -4.6L3.8 -4Q5 0 3.8 3.8L1.6 4.6" fill="#e2e2e2" stroke="#404040" stroke-width="0.8" stroke-linejoin="round"/></g>
<g transform="translate(860 319.6)" ><path d="M-4.6 -1.8L-2.4 -4.4H4.6V2L2.4 4.6H-4.6Z" fill="#fbfbfb" stroke="#404040" stroke-width="0.8" stroke-linejoin="round"/><path d="M-4.6 -1.8H2.4V4.6M2.4 -1.8L4.6 -4.4" fill="none" stroke="#404040" stroke-width="0.7"/></g>
<path d="M840.0 332.54L842.3 335.14000000000004L844.5999999999999 332.54" fill="none" stroke="#3a3a3a" stroke-width="1.15"/>
<rect x="850.4" y="328.44" width="7.4" height="9.6" fill="#fbfbfb" stroke="#404040" stroke-width="0.8"/><path d="M852.9 328.44V338.04M855.3 328.44V338.04M850.4 330.84H857.8M850.4 333.24H857.8M850.4 335.64H857.8" stroke="#404040" stroke-width="0.6"/>
<path d="M847.2 345.28000000000003L849.2 347.28000000000003L847.2 349.28000000000003" fill="none" stroke="#999" stroke-width="0.7"/>
<rect x="854.6" y="344.68" width="11" height="4.4" fill="url(#hat2)" stroke="#555" stroke-width="0.7"/>
<defs><pattern id="hat2" width="1.5" height="1.5" patternUnits="userSpaceOnUse" patternTransform="rotate(45)"><rect width="1.5" height="1.5" fill="#bdbdbd"/><path d="M0 0V1.5" stroke="#555" stroke-width="0.7"/></pattern></defs>
<path d="M847.2 358.72L849.2 360.72L847.2 362.72" fill="none" stroke="#999" stroke-width="0.7"/>
<path d="M857.6 356.52h4.6v2.6h-4.6zM855.6 359.12h4.2v2.4h-4.2zM859.8 359.12h4.2v2.4h-4.2zM854.4 361.52h3.8v2.4h-3.8zM858.2 361.52h3.8v2.4h-3.8zM862 361.52h3.6v2.4h-3.6z" fill="#f4f4f4" stroke="#404040" stroke-width="0.6"/>
<path d="M847.2 372.16L849.2 374.16L847.2 376.16" fill="none" stroke="#999" stroke-width="0.7"/>
<path d="M859.6 368.56h1.6v4.6h-1.6z" fill="#fbfbfb" stroke="#404040" stroke-width="0.6"/><path d="M857.2 373.16h6.4v2.2h-6.4z" fill="#fbfbfb" stroke="#404040" stroke-width="0.7"/><path d="M855.4 378.16Q857 377.16 857.2 375.36H863.6V378.16Z" fill="#fbfbfb" stroke="#404040" stroke-width="0.7" stroke-linejoin="round"/><path d="M854.6 378.26H865.6" stroke="#404040" stroke-width="0.8"/>
<path d="M841.6 385.6L843.6 387.6L841.6 389.6" fill="none" stroke="#999" stroke-width="0.7"/>
<rect x="848.7" y="383.2" width="10.6" height="7.6" fill="#fbfbfb" stroke="#404040" stroke-width="0.8"/><path d="M850.6 384.8V389.2" stroke="#404040" stroke-width="0.7"/><rect x="852.4" y="385.8" width="3.4" height="3.4" fill="#888"/><path d="M856.6 386.2h1.6M856.6 388.2h1.6" stroke="#404040" stroke-width="0.6"/>
<path d="M841.6 399.04L843.6 401.04L841.6 403.04" fill="none" stroke="#999" stroke-width="0.7"/>
<rect x="849.6" y="395.84" width="8.2" height="9.4" fill="#fbfbfb" stroke="#404040" stroke-width="0.8"/><path d="M851.4 398.23999999999995h4.6M851.4 400.53999999999996h4.6M851.4 402.84h4.6" stroke="#404040" stroke-width="0.7"/>
<g transform="translate(893.6 433.2)" ><rect x="-5.4" y="-4.6" width="9" height="7.6" rx="0.8" fill="#fdfdfd" stroke="#404040" stroke-width="0.9"/><rect x="0.8" y="0" width="4.8" height="4.8" fill="#cfe0f6" stroke="#3f78d0" stroke-width="0.8"/><path d="M0.8 1.4h4.8" stroke="#3f78d0" stroke-width="0.8"/></g>
<g transform="translate(911.4 433.4)" ><path d="M-5.4 4.4V-2.4H-2.6V-4H1" fill="none" stroke="#404040" stroke-width="0.9" stroke-linejoin="round"/><path d="M-5.4 4.4H3.6V1.6" fill="none" stroke="#404040" stroke-width="0.9"/><circle cx="3" cy="-2" r="2.9" fill="#eaf2fc" stroke="#3f78d0" stroke-width="0.8"/><path d="M1.4 -2h3.2M3 -3.6v3.2" stroke="#3f78d0" stroke-width="0.8"/></g>
<path d="M926.6 429.6L934 436.9M934 429.6L926.6 436.9" stroke="#e8502a" stroke-width="1.1"/>
<path d="M831.2 467.8V462.4H834V464H838.7V467.8Z" fill="#fbfbfb" stroke="#404040" stroke-width="0.8" stroke-linejoin="round"/>
<rect x="870.3" y="492.6" width="6.6" height="5.6" rx="0.8" fill="none" stroke="#404040" stroke-width="0.9"/><rect x="872.7" y="495.4" width="6.8" height="5.8" rx="0.8" fill="#efefef" stroke="#404040" stroke-width="0.9"/>
<g transform="translate(35.6 483.8)" ><path d="M-2.3 -2A3.5 3.5 0 1 1 -2.1 2.3" fill="none" stroke="#444" stroke-width="0.8"/><path d="M-4.9 -1.4L-2.6 -0.2L-1.8 -2.8" fill="none" stroke="#444" stroke-width="0.8"/><path d="M-2.2 2.6L-5 4.8" stroke="#444" stroke-width="1"/></g>
<g transform="translate(49.8 483.8)" ><path d="M2.3 -2A3.5 3.5 0 1 0 2.1 2.3" fill="none" stroke="#c8c8c8" stroke-width="0.8"/><path d="M4.9 -1.4L2.6 -0.2L1.8 -2.8" fill="none" stroke="#c8c8c8" stroke-width="0.8"/><path d="M2.4 2.8L4.6 4.8" stroke="#c8c8c8" stroke-width="1"/></g>
<g transform="translate(63.2 483.7)" ><circle cx="0" cy="0" r="3.5" fill="none" stroke="#444" stroke-width="0.8"/><path d="M-1.6 0H1.6M0 -1.6V1.6" stroke="#444" stroke-width="0.8"/><path d="M2.6 2.6L5.2 5" stroke="#444" stroke-width="1"/></g>
<g transform="translate(80.6 483.7)" ><circle cx="0" cy="0" r="3.5" fill="none" stroke="#444" stroke-width="0.8"/><path d="M-2.2 -2.2L-0.6 -0.6M2.2 -2.2L0.6 -0.6M-2.2 2.2L-0.6 0.6M2.2 2.2L0.6 0.6" stroke="#444" stroke-width="0.8"/><path d="M2.6 2.6L5.2 5" stroke="#444" stroke-width="1"/></g>
<g transform="translate(157 484.3)" ><path d="M-3.8 0.6L-1.2 -2.6L2 -1.4L-0.6 2Z" fill="none" stroke="#444" stroke-width="0.7" stroke-linejoin="round"/><path d="M1 2.6Q3 1.4 3.2 -0.8M3.2 -0.8L2 0.2M3.2 -0.8L4 0.4" fill="none" stroke="#444" stroke-width="0.7"/></g>
<g transform="translate(232.8 484.3)" ><rect x="-4.5" y="-1.7" width="9" height="3.4" fill="none" stroke="#444" stroke-width="0.8"/><path d="M-2.2 1.7V0.4M0 1.7V0.4M2.2 1.7V0.4" stroke="#444" stroke-width="0.6"/></g>
<g transform="translate(308 484.2)" ><path d="M-4.2 -1.2L-2.2 -3.4H4.4L2.4 -1.2ZM-4.2 1L-2.2 -1.2M2.4 1L4.4 -1.2M-4.2 1H2.4M-4.2 3.2L-2.2 1M2.4 3.2L4.4 1M-4.2 3.2H2.4" fill="none" stroke="#444" stroke-width="0.7" stroke-linejoin="round"/></g>
<g transform="translate(384.3 484.3)" ><rect x="-4.3" y="-3" width="8.6" height="6.2" fill="#4a4a4a"/><path d="M-3 -1.2h1.4M-0.7 -1.2h1.4M1.6 -1.2h1.4M-3 1.2h1.4M-0.7 1.2h1.4M1.6 1.2h1.4" stroke="#e8e8e8" stroke-width="0.9"/></g>
<g transform="translate(460.4 484.4)" ><path d="M-2.2 -3.6V0.6Q-2.2 2.2 0 2.2Q2.2 2.2 2.2 0.6V-3.6M0 2.2V4" fill="none" stroke="#444" stroke-width="0.8"/></g>
<g transform="translate(536.4 484.3)" ><rect x="-5" y="-3" width="10" height="6.2" fill="none" stroke="#444" stroke-width="0.7"/><rect x="-2.8" y="-1.2" width="5.6" height="2.6" fill="none" stroke="#444" stroke-width="0.7"/></g>
<g transform="translate(612 484.2)" ><path d="M-4 -0.4V-2.8H-0.4" fill="none" stroke="#444" stroke-width="0.7"/><rect x="-0.6" y="-3.6" width="3" height="2" fill="none" stroke="#444" stroke-width="0.7"/><rect x="-1.2" y="-0.2" width="5" height="4" fill="#555" stroke="#444" stroke-width="0.6"/><path d="M-4 -0.4H-1.4" stroke="#444" stroke-width="0.7"/></g>
<g transform="translate(688.4 484.4)" ><path d="M-3.8 3L-0.6 -3.4L1 -1.4" fill="none" stroke="#444" stroke-width="0.7"/><path d="M-0.4 3.2V0.4L1.6 -1L3.8 0.6V3.2Z" fill="none" stroke="#444" stroke-width="0.7" stroke-linejoin="round"/><path d="M-4 3.2H0" stroke="#444" stroke-width="0.7"/></g>
<g transform="translate(763.9 484.4)" ><path d="M-4.8 -2.4H4.8" stroke="#444" stroke-width="0.8"/><path d="M-3.8 -3.8V-1M3.8 -3.8V-1" stroke="#444" stroke-width="0.7"/><rect x="-3.8" y="0" width="7.6" height="3.4" fill="none" stroke="#444" stroke-width="0.7"/></g>
<rect x="418.7" y="99.9" width="20" height="9" fill="#fcf8f5"/><path d="M420.5 104.4H436.9" stroke="#dccdc0" stroke-width="0.9" stroke-dasharray="2.6 1.2"/>
<rect x="418.7" y="467.9" width="20" height="9" fill="#fcf8f5"/><path d="M420.5 472.4H436.9" stroke="#dccdc0" stroke-width="0.9" stroke-dasharray="2.6 1.2"/>
<rect x="29" y="279.3" width="10" height="17.4" fill="#fcf8f5"/><path d="M34 280.5V295.5" stroke="#dccdc0" stroke-width="0.9" stroke-dasharray="2.6 1.2"/>
<rect x="818" y="279.3" width="10" height="17.4" fill="#fcf8f5"/><path d="M823 280.5V295.5" stroke="#dccdc0" stroke-width="0.9" stroke-dasharray="2.6 1.2"/></svg>
<div class="a" id="labels" style="left:0;top:0;width:940px;height:504px;filter:grayscale(1)">
<span class="t" style="left:13.1px;top:4px;font-size:7.2px;line-height:7.2px;color:#1c1c1c;transform:rotate(0.03deg) translateY(0.00px) scaleX(0.9623);">webinar_panels_tamas - GRAPHISOFT ARCHICAD-64 21</span>
<span class="t" style="left:4.5px;top:17px;font-size:6.8px;line-height:6.8px;color:#1c1c1c;transform:rotate(0.03deg) translateY(0.80px) scaleX(0.9769);">File</span>
<span class="t" style="left:24px;top:17px;font-size:6.8px;line-height:6.8px;color:#1c1c1c;transform:rotate(0.03deg) translateY(0.80px) scaleX(1.0069);">Edit</span>
<span class="t" style="left:44.7px;top:17px;font-size:6.8px;line-height:6.8px;color:#1c1c1c;transform:rotate(0.03deg) translateY(0.80px) scaleX(1.0336);">View</span>
<span class="t" style="left:69px;top:17px;font-size:6.8px;line-height:6.8px;color:#1c1c1c;transform:rotate(0.03deg) translateY(0.80px) scaleX(0.9919);">Design</span>
<span class="t" style="left:99.6px;top:17px;font-size:6.8px;line-height:6.8px;color:#1c1c1c;transform:rotate(0.03deg) translateY(0.80px) scaleX(1.0780);">Document</span>
<span class="t" style="left:142px;top:17px;font-size:6.8px;line-height:6.8px;color:#1c1c1c;transform:rotate(0.03deg) translateY(0.80px) scaleX(1.0667);">Options</span>
<span class="t" style="left:176px;top:17px;font-size:6.8px;line-height:6.8px;color:#1c1c1c;transform:rotate(0.03deg) translateY(0.80px) scaleX(1.0973);">Teamwork</span>
<span class="t" style="left:218.5px;top:17px;font-size:6.8px;line-height:6.8px;color:#1c1c1c;transform:rotate(0.03deg) translateY(0.80px) scaleX(1.0956);">Window</span>
<span class="t" style="left:254px;top:17px;font-size:6.8px;line-height:6.8px;color:#1c1c1c;transform:rotate(0.03deg) translateY(0.80px) scaleX(1.1084);">Help</span>
<span class="t" style="left:5.5px;top:51px;font-size:5.4px;line-height:5.4px;color:#303030;-webkit-text-stroke:0.1px;transform:rotate(0.03deg) translateY(0.60px) scaleX(0.9858);">Main:</span>
<span class="t" style="left:5.5px;top:66px;font-size:5.4px;line-height:5.4px;color:#303030;-webkit-text-stroke:0.1px;transform:rotate(0.03deg) translateY(0.00px) scaleX(0.9635);">Selected: 1</span>
<span class="t" style="left:5.5px;top:73px;font-size:5.4px;line-height:5.4px;color:#303030;-webkit-text-stroke:0.1px;transform:rotate(0.03deg) translateY(0.30px) scaleX(0.9731);">Editable: 1</span>
<span class="t" style="left:118.2px;top:51px;font-size:5.4px;line-height:5.4px;color:#303030;-webkit-text-stroke:0.1px;transform:rotate(0.03deg) translateY(0.60px) scaleX(0.9543);">Layer:</span>
<span class="t" style="left:231.3px;top:51px;font-size:5.4px;line-height:5.4px;color:#303030;-webkit-text-stroke:0.1px;transform:rotate(0.03deg) translateY(0.60px) scaleX(1.0122);">Geometry Method:</span>
<span class="t" style="left:345px;top:51px;font-size:5.4px;line-height:5.4px;color:#303030;-webkit-text-stroke:0.1px;transform:rotate(0.03deg) translateY(0.60px) scaleX(0.9599);">Reference Plane Location:</span>
<span class="t" style="left:457.5px;top:51px;font-size:5.4px;line-height:5.4px;color:#303030;-webkit-text-stroke:0.1px;transform:rotate(0.03deg) translateY(0.60px) scaleX(1.0053);">Structure:</span>
<span class="t" style="left:571.3px;top:51px;font-size:5.4px;line-height:5.4px;color:#303030;-webkit-text-stroke:0.1px;transform:rotate(0.03deg) translateY(0.60px) scaleX(0.9670);">Floor Plan and Section:</span>
<span class="t" style="left:684.3px;top:51px;font-size:5.4px;line-height:5.4px;color:#303030;-webkit-text-stroke:0.1px;transform:rotate(0.03deg) translateY(0.60px) scaleX(0.9728);">Linked Stories:</span>
<span class="t" style="left:797.5px;top:51px;font-size:5.4px;line-height:5.4px;color:#303030;-webkit-text-stroke:0.1px;transform:rotate(0.03deg) translateY(0.60px) scaleX(0.9956);">Bottom and Top:</span>
<span class="t" style="left:910.5px;top:51px;font-size:5.4px;line-height:5.4px;color:#303030;-webkit-text-stroke:0.1px;transform:rotate(0.03deg) translateY(0.60px) scaleX(0.9789);">Slab Edge Angle:</span>
<span class="t" style="left:136px;top:68px;font-size:6.8px;line-height:6.8px;color:#1c1c1c;transform:rotate(0.03deg) translateY(0.70px) scaleX(0.9420);">A-EF_30_20_Floors</span>
<span class="t" style="left:504.2px;top:68px;font-size:6.8px;line-height:6.8px;color:#1c1c1c;transform:rotate(0.03deg) translateY(0.70px) scaleX(0.9857);">Glass - Blue</span>
<span class="t" style="left:590.4px;top:68px;font-size:6.8px;line-height:6.8px;color:#1c1c1c;transform:rotate(0.03deg) translateY(0.70px) scaleX(1.0223);">Floor Plan and Section...</span>
<span class="t" style="left:684.6px;top:62px;font-size:6.8px;line-height:6.8px;color:#1c1c1c;transform:rotate(0.03deg) translateY(0.50px) scaleX(0.9685);">Home:</span>
<span class="t" style="left:689.2px;top:75px;font-size:6.8px;line-height:6.8px;color:#1c1c1c;transform:rotate(0.03deg) translateY(0.30px) scaleX(1.0216);">0. GF-Ground Floor (Current)</span>
<span class="t" style="left:827.2px;top:62px;font-size:6.8px;line-height:6.8px;color:#1c1c1c;transform:rotate(0.03deg) translateY(0.60px) scaleX(0.9653);">50</span>
<span class="t" style="left:827.2px;top:75px;font-size:6.8px;line-height:6.8px;color:#1c1c1c;transform:rotate(0.03deg) translateY(0.40px) scaleX(0.9521);">0</span>
<span class="t" style="left:44.3px;top:89px;font-size:6.9px;line-height:6.9px;color:#1c1c1c;transform:rotate(0.03deg) translateY(0.80px);">[0. GF-Ground Floor]</span>
<span class="t" style="left:202px;top:88px;font-size:7.0px;line-height:7.0px;color:#1c1c1c;transform:rotate(0.03deg) translateY(0.60px) scaleX(1.0354);">[3D / All]</span>
<div class="a" style="left:0;top:0;width:22.4px;height:504px;overflow:hidden"><span class="t" style="left:1.5px;top:126px;font-size:7.2px;line-height:7.2px;color:#1c1c1c;-webkit-text-stroke:0.22px;transform:rotate(0.03deg) translateY(0.90px);">Design</span></div>
<div class="a" style="left:0;top:0;width:22.3px;height:504px;overflow:hidden"><span class="t" style="left:1.4px;top:414px;font-size:7.2px;line-height:7.2px;color:#1c1c1c;-webkit-text-stroke:0.22px;transform:rotate(0.03deg) translateY(0.50px) scaleX(0.9751);">Docume</span></div>
<span class="t" style="left:1.8px;top:480px;font-size:7.2px;line-height:7.2px;color:#1c1c1c;-webkit-text-stroke:0.22px;transform:rotate(0.03deg) translateY(0.60px) scaleX(0.9640);">More</span>
<span class="t" style="left:9.0px;top:461px;font-size:14px;line-height:14px;color:#5c5c5c;-webkit-text-stroke:0px;transform:rotate(0.03deg) translateY(0.30px) scaleX(1.0488);">A</span>
<span class="t" style="left:11.6px;top:430px;font-size:3.6px;line-height:3.6px;color:#333;transform:rotate(0.03deg) translateY(0.40px);">1.2</span>
<span class="t" style="left:17.2px;top:445px;font-size:3.6px;line-height:3.6px;color:#333;transform:rotate(0.03deg) translateY(0.00px);">1.2</span>
<span class="t" style="left:309.3px;top:37px;font-size:4.6px;line-height:4.6px;color:#222;font-weight:bold;-webkit-text-stroke:0px;transform:rotate(0.03deg) translateY(0.60px) scaleX(1.0484);">1 2</span>
<span class="t" style="left:107px;top:481px;font-size:6.6px;line-height:6.6px;color:#1c1c1c;transform:rotate(0.03deg) translateY(0.60px) scaleX(0.9422);">803%</span>
<span class="t" style="left:180px;top:481px;font-size:6.6px;line-height:6.6px;color:#1c1c1c;transform:rotate(0.03deg) translateY(0.60px) scaleX(0.9644);">0.0000°</span>
<span class="t" style="left:259.5px;top:481px;font-size:6.6px;line-height:6.6px;color:#1c1c1c;transform:rotate(0.03deg) translateY(0.60px) scaleX(0.9688);">1:100</span>
<span class="t" style="left:331.1px;top:481px;font-size:6.6px;line-height:6.6px;color:#1c1c1c;transform:rotate(0.03deg) translateY(0.60px) scaleX(1.0124);">Custom</span>
<span class="t" style="left:398.7px;top:481px;font-size:6.6px;line-height:6.6px;color:#1c1c1c;transform:rotate(0.03deg) translateY(0.60px) scaleX(1.0991);">Entire Model</span>
<span class="t" style="left:470.5px;top:481px;font-size:6.6px;line-height:6.6px;color:#1c1c1c;transform:rotate(0.03deg) translateY(0.60px) scaleX(1.0131);">04-Penset-GA...</span>
<span class="t" style="left:558.7px;top:481px;font-size:6.6px;line-height:6.6px;color:#1c1c1c;transform:rotate(0.03deg) translateY(0.60px) scaleX(1.0256);">Custom</span>
<span class="t" style="left:625.7px;top:481px;font-size:6.6px;line-height:6.6px;color:#1c1c1c;transform:rotate(0.03deg) translateY(0.60px) scaleX(1.0529);">No Overrides</span>
<span class="t" style="left:697.9px;top:481px;font-size:6.6px;line-height:6.6px;color:#1c1c1c;transform:rotate(0.03deg) translateY(0.60px) scaleX(1.0667);">06-Renovatio...</span>
<span class="t" style="left:773.7px;top:481px;font-size:6.6px;line-height:6.6px;color:#1c1c1c;transform:rotate(0.03deg) translateY(0.60px) scaleX(1.0506);">01-Dims-Milli...</span>
<div class="a" style="left:0;top:0;width:928.4px;height:504px;overflow:hidden"><span class="t" style="left:856px;top:115px;font-size:6.7px;line-height:6.7px;color:#1c1c1c;transform:rotate(0.03deg) translateY(0.70px) scaleX(1.0046);">Project Name</span></div>
<div class="a" style="left:0;top:0;width:928.4px;height:504px;overflow:hidden"><span class="t" style="left:862.5px;top:129px;font-size:6.7px;line-height:6.7px;color:#1c1c1c;transform:rotate(0.03deg) translateY(0.20px) scaleX(0.9842);">Stories</span></div>
<div class="a" style="left:0;top:0;width:928.4px;height:504px;overflow:hidden"><span class="t" style="left:868.8px;top:142px;font-size:6.7px;line-height:6.7px;color:#1c1c1c;transform:rotate(0.03deg) translateY(0.70px) scaleX(0.9846);">2. RF-Roof</span></div>
<div class="a" style="left:0;top:0;width:928.4px;height:504px;overflow:hidden"><span class="t" style="left:868.8px;top:156px;font-size:6.7px;line-height:6.7px;color:#1c1c1c;transform:rotate(0.03deg) translateY(0.20px) scaleX(1.0317);">1. 01-First Floor</span></div>
<div class="a" style="left:0;top:0;width:928.4px;height:504px;overflow:hidden"><span class="t" style="left:868.8px;top:169px;font-size:6.7px;line-height:6.7px;color:#1c1c1c;font-weight:bold;transform:rotate(0.03deg) translateY(0.70px) scaleX(0.9729);">0. GF-Ground Floor</span></div>
<div class="a" style="left:0;top:0;width:928.4px;height:504px;overflow:hidden"><span class="t" style="left:868.8px;top:183px;font-size:6.7px;line-height:6.7px;color:#1c1c1c;transform:rotate(0.03deg) translateY(0.10px) scaleX(1.0122);">-1. B1-Basement</span></div>
<div class="a" style="left:0;top:0;width:928.4px;height:504px;overflow:hidden"><span class="t" style="left:868.8px;top:196px;font-size:6.7px;line-height:6.7px;color:#1c1c1c;transform:rotate(0.03deg) translateY(0.50px) scaleX(1.0475);">-2. F1-Foundations</span></div>
<div class="a" style="left:0;top:0;width:928.4px;height:504px;overflow:hidden"><span class="t" style="left:862.5px;top:210px;font-size:6.7px;line-height:6.7px;color:#1c1c1c;transform:rotate(0.03deg) translateY(0.00px) scaleX(1.0251);">Sections</span></div>
<div class="a" style="left:0;top:0;width:928.4px;height:504px;overflow:hidden"><span class="t" style="left:862.5px;top:223px;font-size:6.7px;line-height:6.7px;color:#1c1c1c;transform:rotate(0.03deg) translateY(0.40px) scaleX(1.0143);">Elevations</span></div>
<div class="a" style="left:0;top:0;width:928.4px;height:504px;overflow:hidden"><span class="t" style="left:862.5px;top:236px;font-size:6.7px;line-height:6.7px;color:#1c1c1c;transform:rotate(0.03deg) translateY(0.90px) scaleX(1.0555);">Interior Elevations</span></div>
<div class="a" style="left:0;top:0;width:928.4px;height:504px;overflow:hidden"><span class="t" style="left:862.5px;top:250px;font-size:6.7px;line-height:6.7px;color:#1c1c1c;transform:rotate(0.03deg) translateY(0.30px) scaleX(1.0373);">Worksheets</span></div>
<div class="a" style="left:0;top:0;width:928.4px;height:504px;overflow:hidden"><span class="t" style="left:862.5px;top:263px;font-size:6.7px;line-height:6.7px;color:#1c1c1c;transform:rotate(0.03deg) translateY(0.70px);">Details</span></div>
<div class="a" style="left:0;top:0;width:928.4px;height:504px;overflow:hidden"><span class="t" style="left:862.5px;top:277px;font-size:6.7px;line-height:6.7px;color:#1c1c1c;transform:rotate(0.03deg) translateY(0.10px) scaleX(1.0286);">3D Documents</span></div>
<div class="a" style="left:0;top:0;width:928.4px;height:504px;overflow:hidden"><span class="t" style="left:862.6px;top:290px;font-size:6.7px;line-height:6.7px;color:#1c1c1c;transform:rotate(0.03deg) translateY(0.50px) scaleX(1.0044);">3D</span></div>
<div class="a" style="left:0;top:0;width:928.4px;height:504px;overflow:hidden"><span class="t" style="left:869px;top:304px;font-size:6.7px;line-height:6.7px;color:#1c1c1c;transform:rotate(0.03deg) translateY(0.00px) scaleX(0.9897);">Generic Perspective</span></div>
<div class="a" style="left:0;top:0;width:928.4px;height:504px;overflow:hidden"><span class="t" style="left:869px;top:317px;font-size:6.7px;line-height:6.7px;color:#1c1c1c;transform:rotate(0.03deg) translateY(0.40px) scaleX(1.0397);">Generic Axonometry</span></div>
<div class="a" style="left:0;top:0;width:928.4px;height:504px;overflow:hidden"><span class="t" style="left:862.5px;top:330px;font-size:6.7px;line-height:6.7px;color:#1c1c1c;transform:rotate(0.03deg) translateY(0.80px) scaleX(0.9925);">Schedules</span></div>
<div class="a" style="left:0;top:0;width:928.4px;height:504px;overflow:hidden"><span class="t" style="left:868.6px;top:344px;font-size:6.7px;line-height:6.7px;color:#1c1c1c;transform:rotate(0.03deg) translateY(0.30px) scaleX(0.9824);">Elements</span></div>
<div class="a" style="left:0;top:0;width:928.4px;height:504px;overflow:hidden"><span class="t" style="left:868.6px;top:357px;font-size:6.7px;line-height:6.7px;color:#1c1c1c;transform:rotate(0.03deg) translateY(0.70px) scaleX(1.0390);">Components</span></div>
<div class="a" style="left:0;top:0;width:928.4px;height:504px;overflow:hidden"><span class="t" style="left:868.6px;top:371px;font-size:6.7px;line-height:6.7px;color:#1c1c1c;transform:rotate(0.03deg) translateY(0.10px) scaleX(1.0755);">Surfaces</span></div>
<div class="a" style="left:0;top:0;width:928.4px;height:504px;overflow:hidden"><span class="t" style="left:862.5px;top:384px;font-size:6.7px;line-height:6.7px;color:#1c1c1c;transform:rotate(0.03deg) translateY(0.60px) scaleX(1.0085);">Project Indexes</span></div>
<div class="a" style="left:0;top:0;width:928.4px;height:504px;overflow:hidden"><span class="t" style="left:862.5px;top:398px;font-size:6.7px;line-height:6.7px;color:#1c1c1c;transform:rotate(0.03deg) translateY(0.00px) scaleX(1.0170);">Lists</span></div>
<span class="t" style="left:841.6px;top:448px;font-size:6.8px;line-height:6.8px;color:#1c1c1c;transform:rotate(0.03deg) translateY(0.30px) scaleX(1.0070);">Properties</span>
<span class="t" style="left:843px;top:462px;font-size:6.7px;line-height:6.7px;color:#1c1c1c;transform:rotate(0.03deg) translateY(0.30px) scaleX(0.9860);">0.</span>
<span class="t" style="left:869.4px;top:462px;font-size:6.8px;line-height:6.8px;color:#1c1c1c;transform:rotate(0.03deg) translateY(0.30px) scaleX(1.0280);">GF-Ground Floor</span>
<span class="t" style="left:868.5px;top:476px;font-size:6.8px;line-height:6.8px;color:#1c1c1c;transform:rotate(0.03deg) translateY(0.40px) scaleX(1.0088);">Settings...</span>
</div>
</body></html>
